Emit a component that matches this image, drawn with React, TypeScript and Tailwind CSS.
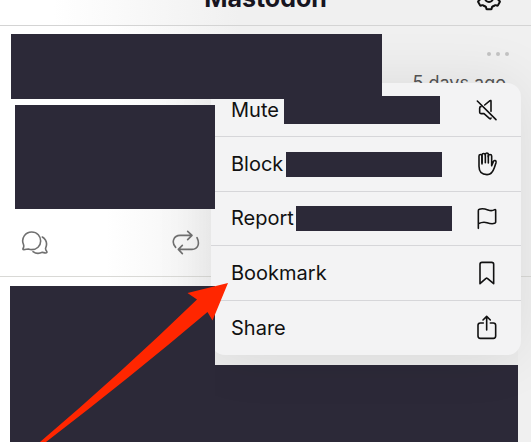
import type { ReactNode } from "react";

function LineIcon({ children }: { children: ReactNode }) {
  return (
    <svg
      viewBox="0 0 84 84"
      className="size-7 shrink-0"
      fill="none"
      stroke="currentColor"
      strokeWidth="4.8"
      strokeLinecap="round"
      strokeLinejoin="round"
      aria-hidden="true"
    >
      {children}
    </svg>
  );
}

const TOOTH =
  "M-15 23.500 L-10 26Q-9 26.500-8.500 29L-8 32Q-7.500 34-6 34H6Q7.500 34 8 32L8.500 29Q9 26.500 10 26L15 23.500";

function GearIcon() {
  return (
    <svg
      viewBox="0 0 84 84"
      className="size-7 shrink-0"
      fill="none"
      stroke="currentColor"
      strokeWidth="6"
      strokeLinecap="round"
      strokeLinejoin="round"
      aria-hidden="true"
    >
      <g transform="translate(42 42)">
        <circle r="12" />
        <path d={TOOTH} />
        <path d={TOOTH} transform="rotate(60)" />
        <path d={TOOTH} transform="rotate(120)" />
        <path d={TOOTH} transform="rotate(180)" />
        <path d={TOOTH} transform="rotate(240)" />
        <path d={TOOTH} transform="rotate(300)" />
      </g>
    </svg>
  );
}

function MuteIcon() {
  return (
    <LineIcon>
      <path d="M13 15 69 71" />
      <path d="M35 27 51 14Q54 12 54 16V46" />
      <path d="M24 32Q20 32 20 36V49Q20 53 24 53H33L50 68Q53 70 54 66" />
    </LineIcon>
  );
}

function HandIcon() {
  return (
    <LineIcon>
      <path d="M27 42V18C27 12 18 12 18 18V49C18 65 27 74 42 74C55 74 60 65 64 53L69 38C71 31 63 29 61 35L56 47V18C56 12 46 12 46 18V39" />
      <path d="M27 38V15C27 9 37 9 37 15V38" />
      <path d="M37 15C37 7 46 7 46 14V20" />
    </LineIcon>
  );
}

function FlagIcon() {
  return (
    <LineIcon>
      <path d="M16 73V20Q16 17 19 16C28 12 37 15 45 18C53 21 60 20 65 17Q68 16 68 19V55Q68 57 65 58C57 61 50 59 42 56C33 53 24 55 16 59" />
    </LineIcon>
  );
}

function BookmarkIcon() {
  return (
    <LineIcon>
      <path d="M21 74V16Q21 10 27 10H56Q62 10 62 16V74L43 58Q41 56 39 58Z" />
    </LineIcon>
  );
}

function ShareIcon() {
  return (
    <LineIcon>
      <path d="M31 27H22Q15 27 15 34V66Q15 73 22 73H61Q68 73 68 66V34Q68 27 61 27H52" />
      <path d="M41 48V7M30 18 41 7 52 18" />
    </LineIcon>
  );
}

function ReplyIcon() {
  return (
    <LineIcon>
      <path d="M9 62C5 62 5 60 7 57C9 53 9 50 7 45C0 28 13 9 32 9C49 9 59 22 59 36C59 51 47 62 32 62C28 62 25 61 22 60C18 60 14 62 9 62Z" />
      <path d="M64 24C76 32 79 45 74 57C73 60 74 63 77 67C79 70 77 72 74 72C70 72 67 70 64 70C53 75 43 73 36 68" />
    </LineIcon>
  );
}

function BoostIcon() {
  return (
    <LineIcon>
      <path d="M11 55C-3 40 5 19 24 19H60M47 7 60 19 47 32" />
      <path d="M75 26C84 44 78 61 60 61H20M31 49 19 61 31 74" />
    </LineIcon>
  );
}

const items = [
  { label: "Mute", icon: <MuteIcon />, gap: "gap-[5px]", redaction: "h-7 w-[156px]" },
  { label: "Block", icon: <HandIcon />, gap: "gap-[3px]", redaction: "h-[25px] w-[156px]" },
  { label: "Report", icon: <FlagIcon />, gap: "gap-[2px]", redaction: "h-[25px] w-[156px]" },
  { label: "Bookmark", icon: <BookmarkIcon />, gap: "gap-1", redaction: null },
  { label: "Share", icon: <ShareIcon />, gap: "gap-1", redaction: null },
];

function PostMenu() {
  return (
    <div
      role="menu"
      className="absolute left-[211px] right-[10px] top-[83px] z-10 grid h-[272px] grid-rows-5 overflow-hidden rounded-[14px] bg-[#f3f3f4] shadow-[0_0_60px_rgba(0,0,0,0.09)]"
    >
      {items.map((item) => (
        <button
          key={item.label}
          type="button"
          role="menuitem"
          className={`flex items-center border-b border-[#d6d6d9] px-5 text-left text-[20px] leading-6 text-[#111] last:border-b-0 ${item.gap}`}
        >
          {item.label}
          {item.redaction && <span className={`bg-[#2c2938] ${item.redaction}`} />}
          <span className="ml-auto">{item.icon}</span>
        </button>
      ))}
    </div>
  );
}

export default function App() {
  return (
    <div className="relative flex min-h-screen flex-col overflow-hidden bg-linear-to-r from-white from-20% to-[#f0f0f0] to-45% font-['Inter','Liberation_Sans',sans-serif]">
      {/* header is scrolled halfway out of view */}
      <header className="-mt-[26px] grid h-[52px] shrink-0 grid-cols-[1fr_auto_1fr] items-center border-b border-[#d4d4d4] bg-linear-to-r from-white from-10% to-[#f0f0f0] to-45%">
        <span />
        <h1 className="pb-1 text-[25px] font-bold leading-8 text-[#17151f]">Mastodon</h1>
        <button type="button" aria-label="Settings" className="mr-7 justify-self-end pb-1 text-[#111]">
          <GearIcon />
        </button>
      </header>

      <article className="border-b border-[#d9d9d6] pt-2">
        <div className="flex pl-[11px]">
          <div className="relative z-20 h-[65px] flex-1 bg-[#2c2938]" />
          <div className="flex w-[149px] flex-col items-end pt-[18px]">
            <button type="button" aria-label="More" className="mr-[22px] flex gap-[5px] text-[#c3c3c3]">
              <span className="size-1 rounded-full bg-current" />
              <span className="size-1 rounded-full bg-current" />
              <span className="size-1 rounded-full bg-current" />
            </button>
            <time className="mr-[25px] mt-[15px] text-[18px] leading-6 text-[#555]">5 days ago</time>
          </div>
        </div>
        <div className="relative z-20 ml-[15px] mt-[6px] h-[104px] w-[200px] bg-[#2c2938]" />
        <div className="flex h-[67px] w-[200px] items-center justify-between pl-[21px] text-[#707070]">
          <button type="button" aria-label="Reply">
            <ReplyIcon />
          </button>
          <button type="button" aria-label="Boost">
            <BoostIcon />
          </button>
        </div>
      </article>

      <article className="mt-[9px] flex flex-1 pl-[10px] pr-[13px]">
        <div className="relative z-20 w-[205px] bg-[#2c2938]" />
        <div className="flex flex-1 flex-col">
          <div className="h-[79px] bg-[#ececec]" />
          <div className="min-h-[77px] flex-1 bg-[#2c2938]" />
        </div>
      </article>

      <PostMenu />

      <svg
        viewBox="0 0 189 160"
        className="absolute left-[40px] top-[282px] z-30 h-[160px] w-[189px]"
        aria-hidden="true"
      >
        <path
          d="M188 1 147.500 11 157 17.500Q80 92 0 160H6Q92 94 167.500 30L172.500 38.500Z"
          fill="#ff2600"
        />
      </svg>
    </div>
  );
}
